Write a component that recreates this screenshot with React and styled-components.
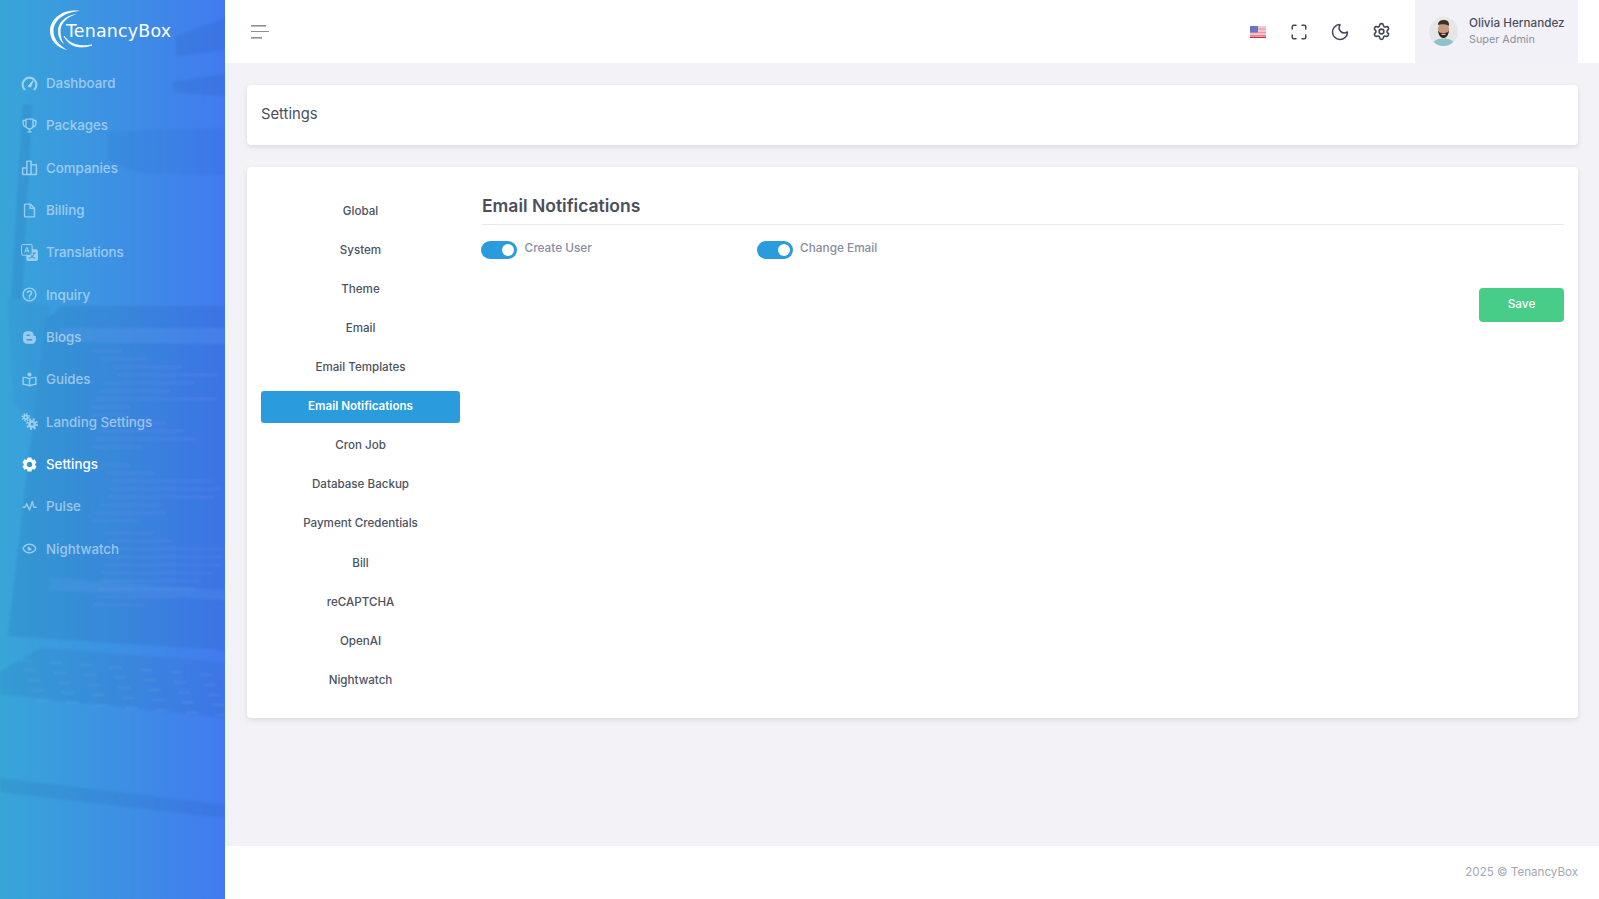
import React from 'react';
import styled, { createGlobalStyle } from 'styled-components';
import { Maximize, Moon, Settings as SettingsIcon } from 'lucide-react';
import {
  BiTrophy,
  BiFileBlank,
  BiHelpCircle,
  BiLogoBlogger,
  BiBookReader,
  BiSolidCog,
  BiPulse,
  BiShowAlt,
} from 'react-icons/bi';
import { BsTranslate } from 'react-icons/bs';

const GlobalStyle = createGlobalStyle`
    html, body {
        margin: 0;
        height: 100%;
    }
    body {
        font-family: Inter, "Liberation Sans", sans-serif;
        background: #f2f2f7;
    }
    * {
        box-sizing: border-box;
    }
`;

const Container = styled.div`
    display: grid;
    width: 100%;
    min-height: 100vh;
    grid-template-columns: 225px 1fr;
`;

const Sidebar = styled.aside`
    position: relative;
    overflow: hidden;
    background: linear-gradient(90deg, #38a5d9 0%, #3d8fe4 55%, #427af0 100%);
`;

const SidebarPhoto = styled.svg`
    position: absolute;
    top: 0;
    left: 0;
    filter: blur(0.8px);
`;

const SidebarInner = styled.div`
    position: relative;
    display: flex;
    flex-direction: column;
`;

const LogoRow = styled.div`
    display: flex;
    align-items: center;
    height: 62px;
    padding-left: 49px;
`;

const LogoText = styled.span`
    margin-left: -35px;
    font-family: "DejaVu Sans", sans-serif;
    font-size: 17.4px;
    font-weight: 400;
    letter-spacing: 0.2px;
    color: #fff;
`;

const Nav = styled.nav`
    display: flex;
    flex-direction: column;
`;

const NavItem = styled.a`
    display: flex;
    align-items: center;
    gap: 8px;
    height: 42.33px;
    padding-left: 21px;
    font-size: 13.3px;
    font-weight: 500;
    color: ${(p) => (p.$active ? '#fff' : 'rgba(255, 255, 255, 0.5)')};
    svg {
        flex: none;
        width: 17px;
        height: 17px;
    }
`;

const Main = styled.div`
    display: flex;
    flex-direction: column;
    min-width: 0;
`;

const Topbar = styled.header`
    display: flex;
    align-items: center;
    height: 63px;
    padding-left: 26px;
    padding-right: 21px;
    background: #fff;
`;

const Burger = styled.svg`
    flex: none;
`;

const TopActions = styled.div`
    display: flex;
    align-items: center;
    gap: 22px;
    margin-left: auto;
    margin-right: 24.5px;
    color: #3f4654;
`;

const FlagIcon = styled.svg`
    margin-right: 2px;
`;

const UserBox = styled.div`
    display: flex;
    align-items: center;
    gap: 11px;
    width: 163px;
    height: 63px;
    padding-left: 14px;
    background: #f2f1f7;
`;

const UserText = styled.div`
    display: flex;
    flex-direction: column;
    gap: 2px;
    padding-bottom: 1px;
`;

const UserName = styled.span`
    font-size: 11.7px;
    font-weight: 500;
    line-height: 15px;
    color: #4a4f5e;
`;

const UserRole = styled.span`
    font-size: 10.8px;
    line-height: 14px;
    color: #8c8fa3;
`;

const Content = styled.main`
    flex: 1;
    display: flex;
    flex-direction: column;
    gap: 22px;
    padding: 22px 21px 0 22px;
`;

const Card = styled.section`
    background: #fff;
    border-radius: 4px;
    box-shadow: 0 2px 5px rgba(50, 58, 70, 0.12);
`;

const TitleCard = styled(Card)`
    display: flex;
    align-items: center;
    height: 60px;
    padding: 0 14px 2px;
`;

const PageTitle = styled.h1`
    margin: 0;
    font-size: 14.8px;
    font-weight: 400;
    color: #4a4f5c;
`;

const SettingsCard = styled(Card)`
    display: grid;
    grid-template-columns: 199px minmax(0, 1fr);
    column-gap: 22px;
    height: 551px;
    padding: 28.6px 14px 0;
`;

const TabList = styled.div`
    display: flex;
    flex-direction: column;
    gap: 7.12px;
`;

const Tab = styled.a`
    display: flex;
    align-items: center;
    justify-content: center;
    height: 32px;
    padding-bottom: 2px;
    border-radius: 3px;
    font-size: 11.6px;
    font-weight: ${(p) => (p.$active ? 600 : 500)};
    color: ${(p) => (p.$active ? '#fff' : '#4d525f')};
    background: ${(p) => (p.$active ? '#2a9bdc' : 'transparent')};
`;

const Panel = styled.div`
    display: flex;
    flex-direction: column;
    margin-top: -0.6px;
`;

const PanelTitle = styled.h2`
    margin: 0;
    padding-bottom: 8px;
    border-bottom: 1px solid #e7e7ee;
    font-size: 17.5px;
    font-weight: 600;
    line-height: 21px;
    color: #4a4f5c;
`;

const ToggleGrid = styled.div`
    display: grid;
    grid-template-columns: repeat(2, 275.6px);
    margin-top: 16px;
    margin-left: -1px;
`;

const ToggleField = styled.label`
    display: flex;
    align-items: flex-start;
    gap: 7.5px;
`;

const ToggleTrack = styled.span`
    position: relative;
    flex: none;
    width: 36px;
    height: 18px;
    border-radius: 9px;
    background: #2a9bdc;
    &::after {
        content: '';
        position: absolute;
        top: 3px;
        right: 3px;
        width: 12px;
        height: 12px;
        border-radius: 50%;
        background: #fff;
    }
`;

const ToggleLabel = styled.span`
    font-size: 11.8px;
    font-weight: 500;
    line-height: 14px;
    color: #8a8ca0;
`;

const SaveRow = styled.div`
    display: flex;
    justify-content: flex-end;
    margin-top: 29px;
`;

const SaveButton = styled.button`
    width: 85px;
    height: 34px;
    padding: 0 0 3px;
    border: 0;
    border-radius: 4px;
    background: #48cd88;
    font-family: inherit;
    font-size: 11.8px;
    font-weight: 500;
    color: #fff;
`;

const Footer = styled.footer`
    display: flex;
    align-items: center;
    justify-content: flex-end;
    height: 53px;
    padding: 0 21px 2px 0;
    background: #fff;
    font-size: 11.6px;
    color: #a2a8b4;
`;

function GaugeIcon() {
    return (
        <svg viewBox="0 0 16 16" fill="none" stroke="currentColor">
            <path d="M3.300 13.500A6.500 6.500 0 1 1 12.700 13.500" strokeWidth="2" strokeLinecap="round" />
            <path d="M6.600 10.600L11.400 5.200L9.200 11.400Z" fill="currentColor" strokeWidth="0.800" strokeLinejoin="round" />
        </svg>
    );
}

function ColumnsIcon() {
    return (
        <svg viewBox="0 0 16 16" fill="none" stroke="currentColor" strokeWidth="1.4">
            <path d="M1.5 14.500V8.500H5.500V14.500ZM5.500 14.500V2H9.500V14.500ZM9.500 14.500V5.500H14.500V14.500Z" strokeLinejoin="round" />
        </svg>
    );
}

function TwoCogsIcon() {
    return (
        <svg viewBox="0 0 16 16" fill="none" stroke="currentColor">
            <circle cx="4.500" cy="4" r="1.700" strokeWidth="1.600" />
            <circle cx="4.500" cy="4" r="3.300" strokeWidth="1.300" strokeDasharray="1.300 1.300" />
            <circle cx="10.500" cy="10.500" r="2.500" strokeWidth="2.400" />
            <circle cx="10.500" cy="10.500" r="4.700" strokeWidth="1.700" strokeDasharray="1.900 1.800" />
        </svg>
    );
}

const navItems = [
    ['Dashboard', GaugeIcon],
    ['Packages', BiTrophy],
    ['Companies', ColumnsIcon],
    ['Billing', BiFileBlank],
    ['Translations', BsTranslate],
    ['Inquiry', BiHelpCircle],
    ['Blogs', BiLogoBlogger],
    ['Guides', BiBookReader],
    ['Landing Settings', TwoCogsIcon],
    ['Settings', BiSolidCog, true],
    ['Pulse', BiPulse],
    ['Nightwatch', BiShowAlt],
];

const tabs = [
    'Global',
    'System',
    'Theme',
    'Email',
    'Email Templates',
    'Email Notifications',
    'Cron Job',
    'Database Backup',
    'Payment Credentials',
    'Bill',
    'reCAPTCHA',
    'OpenAI',
    'Nightwatch',
];

// faint code lines on the laptop screen in the sidebar photo
const codeLines = [
    [92, 350, 30], [100, 358, 46], [112, 366, 70], [118, 374, 100], [104, 382, 90],
    [100, 390, 70], [96, 398, 120], [90, 406, 40], [92, 414, 36], [106, 422, 60],
    [100, 430, 84], [96, 438, 100], [92, 446, 50], [100, 464, 30], [106, 472, 48],
    [112, 480, 100], [110, 488, 110], [108, 496, 106], [100, 504, 60], [96, 512, 70],
    [92, 520, 46], [104, 532, 50], [108, 540, 64], [108, 548, 116], [106, 556, 116],
    [104, 564, 116], [102, 572, 110], [100, 580, 100], [98, 588, 96], [96, 596, 80],
    [94, 604, 50],
];

const keyRows = [658, 668, 678, 688, 698];

function SidebarBackdrop() {
    return (
        <SidebarPhoto width="225" height="899" viewBox="0 0 225 899">
            <g fill="#12408f" opacity="0.11">
                <path d="M176 36L225 18V50L176 56Z" />
                <path d="M173 82L225 74V96L173 92Z" />
                <path d="M23 105H32L22 300L11 300Z" />
                <path d="M107 132L225 128V175L135 172L107 160Z" opacity="0.45" />
                <path d="M62 306H225V650L8 636L45 320Z" />
                <path d="M8 300L50 306L38 420L14 405Z" opacity="0.5" />
            </g>
            <path d="M60 328H225V344L58 342Z" fill="#6aa6f5" opacity="0.22" />
            <g fill="#7c95f2" opacity="0.28">
                {codeLines.map(([x, y, w]) => (
                    <rect key={y} x={x} y={y} width={w} height="1.800" />
                ))}
            </g>
            <path d="M50 578L225 590V600L50 590Z" fill="#6aa6f5" opacity="0.16" />
            <path d="M40 648L225 662V718L0 694V672Z" fill="#12408f" opacity="0.09" />
            <g fill="#8fc0f5" opacity="0.18">
                {keyRows.map((y, row) =>
                    [20, 50, 80, 110, 140, 170, 200].map((x) => (
                        <rect key={`${y}-${x}`} x={x + row * 4} y={y + x * 0.08} width="12" height="1.600" />
                    ))
                )}
            </g>
            <path d="M0 778L225 805V818L0 792Z" fill="#12408f" opacity="0.1" />
        </SidebarPhoto>
    );
}

function LogoMark() {
    return (
        <svg width="52" height="44" viewBox="0 0 52 44" fill="none">
            <path
                d="M31 2C14 -1 1 10 1 22C1 32 9 39 18 41C10 36 4.500 30 4.500 22C4.500 11 16 3 31 2Z"
                fill="#fff"
            />
            <path d="M28 5C16 6 9 14 9 22C9 27 11 32 15 35C12.500 31 11.500 27 11.500 22C11.500 14 18 8 28 5Z" fill="#fff" />
            <path d="M15 27C19 36 29 41 43 36C31 38 21 36 15 27Z" fill="#fff" stroke="#fff" strokeWidth="0.8" />
        </svg>
    );
}

function Flag() {
    return (
        <FlagIcon width="16" height="12" viewBox="0 0 16 12">
            <rect width="16" height="12" fill="#f0c9cf" />
            <rect y="2.400" width="16" height="1.200" fill="#ee9aa6" />
            <rect y="6" width="16" height="1.200" fill="#ee9aa6" />
            <rect y="9" width="16" height="1.200" fill="#e8808f" />
            <rect y="10.800" width="16" height="1.200" fill="#d8293d" />
            <rect width="8" height="6.500" fill="#6c74c4" />
        </FlagIcon>
    );
}

function Avatar() {
    return (
        <svg width="29" height="29" viewBox="0 0 29 29" style={{ flex: 'none' }}>
            <clipPath id="avatar-clip">
                <circle cx="14.500" cy="14.500" r="14.500" />
            </clipPath>
            <g clipPath="url(#avatar-clip)">
                <rect width="29" height="29" fill="#e6e6e6" />
                <path d="M3 29C4 23 9 21.500 14.500 21.500C20 21.500 25 23 26 29Z" fill="#8fc3cc" />
                <ellipse cx="14.500" cy="12.500" rx="5.600" ry="7" fill="#c99a7d" />
                <path d="M9 8C9 4 12 3 15 3C18.500 3 20.500 5 20 9C18 7 12 7 9 8Z" fill="#3e3128" />
                <path d="M9 13C9.500 19 12 21 14.500 21C17 21 19.500 19 20 13C19 16 17 16 14.500 16C12 16 10 16 9 13Z" fill="#33281f" />
                <rect x="12.500" y="16.800" width="4" height="1" fill="#f1ece6" />
            </g>
        </svg>
    );
}

export default function App() {
    return (
        <Container>
            <GlobalStyle />
            <Sidebar>
                <SidebarBackdrop />
                <SidebarInner>
                    <LogoRow>
                        <LogoMark />
                        <LogoText>TenancyBox</LogoText>
                    </LogoRow>
                    <Nav>
                        {navItems.map(([label, Icon, active]) => (
                            <NavItem key={label} $active={active}>
                                <Icon />
                                {label}
                            </NavItem>
                        ))}
                    </Nav>
                </SidebarInner>
            </Sidebar>
            <Main>
                <Topbar>
                    <Burger width="18" height="14" viewBox="0 0 18 14">
                        <g fill="#8b909d">
                            <rect width="15" height="1.600" />
                            <rect y="6" width="18" height="1" />
                            <rect y="12" width="11" height="1.600" />
                        </g>
                    </Burger>
                    <TopActions>
                        <Flag />
                        <Maximize size={18} strokeWidth={2} />
                        <Moon size={20} strokeWidth={1.8} />
                        <SettingsIcon size={19} strokeWidth={2} />
                    </TopActions>
                    <UserBox>
                        <Avatar />
                        <UserText>
                            <UserName>Olivia Hernandez</UserName>
                            <UserRole>Super Admin</UserRole>
                        </UserText>
                    </UserBox>
                </Topbar>
                <Content>
                    <TitleCard>
                        <PageTitle>Settings</PageTitle>
                    </TitleCard>
                    <SettingsCard>
                        <TabList>
                            {tabs.map((tab) => (
                                <Tab key={tab} $active={tab === 'Email Notifications'}>
                                    {tab}
                                </Tab>
                            ))}
                        </TabList>
                        <Panel>
                            <PanelTitle>Email Notifications</PanelTitle>
                            <ToggleGrid>
                                <ToggleField>
                                    <ToggleTrack />
                                    <ToggleLabel>Create User</ToggleLabel>
                                </ToggleField>
                                <ToggleField>
                                    <ToggleTrack />
                                    <ToggleLabel>Change Email</ToggleLabel>
                                </ToggleField>
                            </ToggleGrid>
                            <SaveRow>
                                <SaveButton>Save</SaveButton>
                            </SaveRow>
                        </Panel>
                    </SettingsCard>
                </Content>
                <Footer>2025 © TenancyBox</Footer>
            </Main>
        </Container>
    );
}
